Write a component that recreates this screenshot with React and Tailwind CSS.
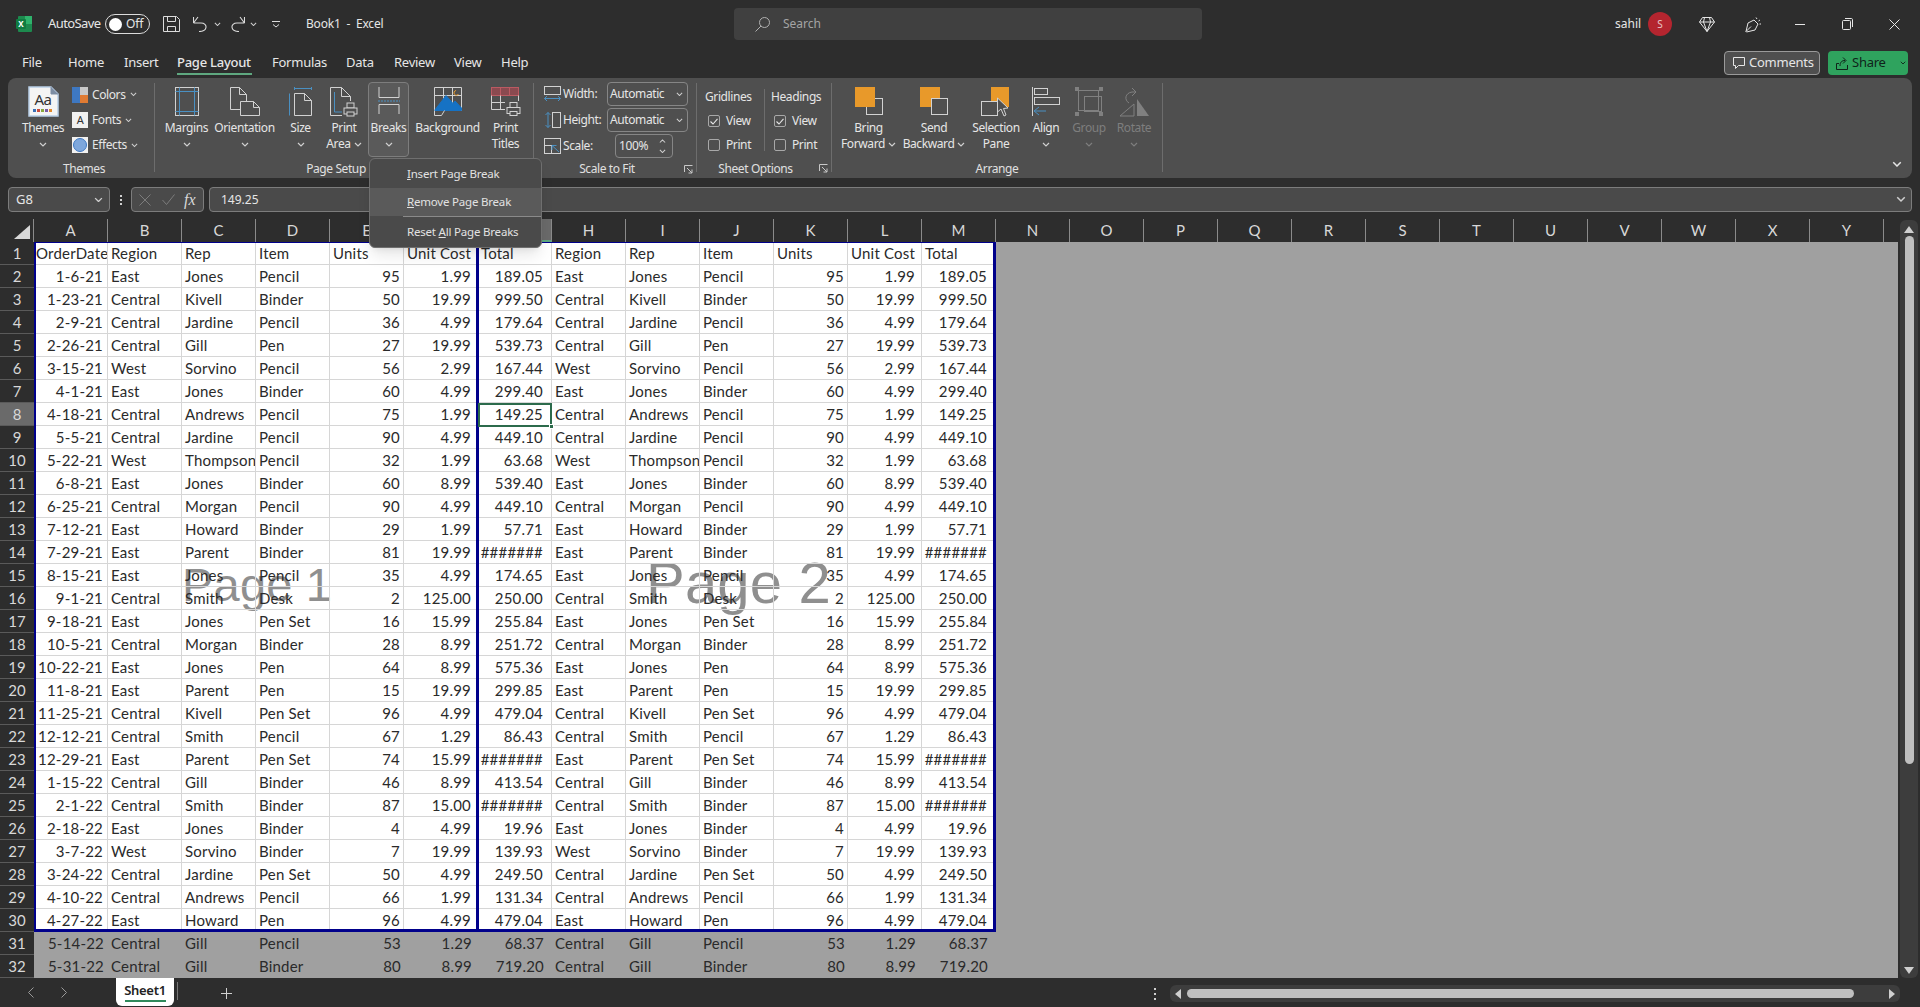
import React from "react";

const L = "#d2d2d2";
const B = "#4a90c2";
const O = "#e8992a";
const D = "#808080";

const rows = [
  ["1-6-21","East","Jones","Pencil","95","1.99","189.05"],
  ["1-23-21","Central","Kivell","Binder","50","19.99","999.50"],
  ["2-9-21","Central","Jardine","Pencil","36","4.99","179.64"],
  ["2-26-21","Central","Gill","Pen","27","19.99","539.73"],
  ["3-15-21","West","Sorvino","Pencil","56","2.99","167.44"],
  ["4-1-21","East","Jones","Binder","60","4.99","299.40"],
  ["4-18-21","Central","Andrews","Pencil","75","1.99","149.25"],
  ["5-5-21","Central","Jardine","Pencil","90","4.99","449.10"],
  ["5-22-21","West","Thompson","Pencil","32","1.99","63.68"],
  ["6-8-21","East","Jones","Binder","60","8.99","539.40"],
  ["6-25-21","Central","Morgan","Pencil","90","4.99","449.10"],
  ["7-12-21","East","Howard","Binder","29","1.99","57.71"],
  ["7-29-21","East","Parent","Binder","81","19.99","#######"],
  ["8-15-21","East","Jones","Pencil","35","4.99","174.65"],
  ["9-1-21","Central","Smith","Desk","2","125.00","250.00"],
  ["9-18-21","East","Jones","Pen Set","16","15.99","255.84"],
  ["10-5-21","Central","Morgan","Binder","28","8.99","251.72"],
  ["10-22-21","East","Jones","Pen","64","8.99","575.36"],
  ["11-8-21","East","Parent","Pen","15","19.99","299.85"],
  ["11-25-21","Central","Kivell","Pen Set","96","4.99","479.04"],
  ["12-12-21","Central","Smith","Pencil","67","1.29","86.43"],
  ["12-29-21","East","Parent","Pen Set","74","15.99","#######"],
  ["1-15-22","Central","Gill","Binder","46","8.99","413.54"],
  ["2-1-22","Central","Smith","Binder","87","15.00","#######"],
  ["2-18-22","East","Jones","Binder","4","4.99","19.96"],
  ["3-7-22","West","Sorvino","Binder","7","19.99","139.93"],
  ["3-24-22","Central","Jardine","Pen Set","50","4.99","249.50"],
  ["4-10-22","Central","Andrews","Pencil","66","1.99","131.34"],
  ["4-27-22","East","Howard","Pen","96","4.99","479.04"],
  ["5-14-22","Central","Gill","Pencil","53","1.29","68.37"],
  ["5-31-22","Central","Gill","Binder","80","8.99","719.20"],
];
const headers = ["OrderDate","Region","Rep","Item","Units","Unit Cost","Total"];
const cols = "ABCDEFGHIJKLMNOPQRSTUVWXY".split("");

function Chev({ size = 8, color = "#d0d0d0", up = false }) {
  return (
    <svg width={size} height={size * 0.625} viewBox="0 0 8 5" fill="none" stroke={color} strokeWidth="1.2" className="shrink-0">
      <path d={up ? "M1 4 L4 1 L7 4" : "M1 1 L4 4 L7 1"} />
    </svg>
  );
}

function Printer({ x, y, c = L }) {
  return (
    <g transform={`translate(${x} ${y})`} stroke={c} fill="#4f4f4f" strokeWidth="1">
      <rect x="3.5" y="0.5" width="7" height="5" />
      <rect x="0.5" y="5.5" width="13" height="6" />
      <rect x="3.5" y="9.5" width="7" height="4" />
    </g>
  );
}

function Ic({ w, h, children, cls = "" }) {
  return (
    <svg width={w} height={h} viewBox={`0 0 ${w} ${h}`} fill="none" className={`shrink-0 ${cls}`}>
      {children}
    </svg>
  );
}

const MarginsIcon = () => (
  <Ic w={24} h={29}>
    <rect x="0.5" y="0.5" width="23" height="28" stroke={L} />
    <path d="M4.5 0.5V28.5M19.5 0.5V28.5M0.5 4.5H23.5M0.5 24.5H23.5" stroke={B} />
  </Ic>
);
const OrientationIcon = () => (
  <Ic w={30} h={29}>
    <path d="M0.5 22.5V0.5H9.5L16.5 7.5V14.5M9.5 0.5V7.5H16.5M0.5 22.5H10.5" stroke={L} />
    <path d="M10.5 14.5H23.5L29.5 20.5V28.5H10.5ZM23.5 14.5V20.5H29.5" stroke={L} />
  </Ic>
);
const SizeIcon = () => (
  <Ic w={23} h={29}>
    <path d="M5.5 28.5V6.5H15.5L22.5 13.5V28.5ZM15.5 6.5V13.5H22.5" stroke={L} />
    <path d="M0.5 6.5V28.5M5.5 1.5H22.5M5.5 0V3M22.5 0V3" stroke={B} />
  </Ic>
);
const PrintAreaIcon = () => (
  <Ic w={28} h={30}>
    <path d="M0.5 28.5V0.5H11.5L20.5 9.5V14M11.5 0.5V9.5H20.5M0.5 28.5H12" stroke={L} />
    <path d="M4.5 5V25H12" stroke={B} />
    <Printer x={13.5} y={15.5} />
  </Ic>
);
const BreaksIcon = () => (
  <Ic w={22} h={27}>
    <path d="M1 0V10.5H21V0M1 27V17.5H21V27" stroke={L} />
    <path d="M0 14H22" stroke={B} strokeDasharray="2 1" />
  </Ic>
);
const BackgroundIcon = () => (
  <Ic w={28} h={29}>
    <path d="M0.5 0.5H27.5V23.5H0.5Z M9.5 0.5V23.5 M18.5 0.5V23.5 M0.5 8.5H27.5" stroke={L} />
    <path d="M0.5 23.5 L12 8.5 L19 16.5 L21 14 L27.5 21 V23.5 Z" fill="#1672c4" stroke="#1672c4" />
    <path d="M22 3.5a2.4 2.4 0 1 0 2.5 3.5" stroke={O} />
    <path d="M0.5 23.5V28.5H7.5L10.5 23.5" stroke={L} />
  </Ic>
);
const PrintTitlesIcon = () => (
  <Ic w={30} h={29}>
    <rect x="0.5" y="0.5" width="27" height="8" fill="#8a4a50" stroke="#bb5a62" />
    <path d="M9.5 0.5V8.5M18.5 0.5V8.5" stroke="#bb5a62" />
    <path d="M0.5 8.5V22.5H14M9.5 8.5V22.5M0.5 15.5H14M27.5 8.5V14" stroke={L} />
    <Printer x={15.5} y={15} />
  </Ic>
);
const BringIcon = () => (
  <Ic w={28} h={28}>
    <rect x="11.5" y="11.5" width="16" height="16" stroke={L} />
    <rect x="0" y="0" width="20" height="20" fill={O} />
  </Ic>
);
const SendIcon = () => (
  <Ic w={28} h={28}>
    <rect x="0" y="0" width="20" height="20" fill={O} />
    <rect x="11.5" y="11.5" width="16" height="16" stroke={L} fill="#4f4f4f" />
  </Ic>
);
const SelectionIcon = () => (
  <Ic w={30} h={30}>
    <rect x="10" y="0" width="18" height="20" fill={O} />
    <rect x="0.5" y="14.5" width="16" height="14" stroke={L} fill="#4f4f4f" />
    <path d="M16.5 11 L16.5 25 L20 22 L23 29 L25 28 L22.5 21.5 L27 21 Z" fill="#4f4f4f" stroke={L} />
  </Ic>
);
const AlignIcon = () => (
  <Ic w={29} h={29}>
    <path d="M0.5 0V29" stroke={L} />
    <rect x="2.5" y="1.5" width="13" height="6" stroke={L} />
    <rect x="2.5" y="10.5" width="25" height="7" stroke={L} />
    <path d="M2 24H14M2 24L7 20M2 24L7 28" stroke={B} />
  </Ic>
);
const GroupIcon = () => (
  <Ic w={28} h={29}>
    <rect x="3.5" y="3.5" width="20" height="20" stroke={D} />
    <rect x="9.5" y="9.5" width="17" height="15" stroke={D} />
    <path d="M0 0H4V4H0ZM24 0H28V4H24ZM0 25H4V29H0ZM24 25H28V29H24Z" fill={D} />
  </Ic>
);
const RotateIcon = () => (
  <Ic w={31} h={30}>
    <path d="M1 29 L15 17 V29 Z" stroke={D} />
    <path d="M18 12 L30 29 H18 Z" fill={D} />
    <path d="M13 1 L17 5 L13 9 M17 5 H13 C6 6 5 13 10 16" stroke={D} />
  </Ic>
);

const ThemesIcon = () => (
  <svg width="31" height="31" viewBox="0 0 31 31" fill="none" className="shrink-0">
    <path d="M1 1H23L30 8V30H1Z" fill="#f4f4f4" stroke="#b9cfe8" strokeWidth="1.5" />
    <path d="M23 1V8H30" fill="#7d8da3" stroke="#7d8da3" />
    <text x="15" y="19" textAnchor="middle" fontFamily="Noto Sans" fontSize="15" fill="#333">Aa</text>
    <rect x="5" y="23" width="3" height="3" fill="#3a6fb5" />
    <rect x="9" y="23" width="3" height="3" fill="#c8493a" />
    <rect x="13" y="23" width="3" height="3" fill="#8aa83d" />
    <rect x="17" y="23" width="3" height="3" fill="#7b5ba6" />
    <rect x="21" y="23" width="3" height="3" fill="#e08a2c" />
  </svg>
);
const ColorsIcon = () => (
  <Ic w={16} h={16}>
    <rect width="8" height="8" fill="#3e78c2" />
    <rect x="8" width="8" height="8" fill="#c9c9c9" />
    <rect y="8" width="8" height="8" fill="#3e78c2" />
    <rect x="8" y="8" width="8" height="8" fill="#e07b33" />
  </Ic>
);
const FontsIcon = () => (
  <div className="w-4 h-4 bg-[#f1f1f1] flex items-center justify-center text-[11px] leading-none text-[#333] shrink-0">A</div>
);
const EffectsIcon = () => (
  <Ic w={16} h={16}>
    <rect width="16" height="16" fill="#f1f1f1" />
    <circle cx="8" cy="8" r="6.5" fill="#7ea7dc" stroke="#3e78c2" />
  </Ic>
);
const WidthIcon = () => (
  <Ic w={17} h={16}>
    <rect x="0.5" y="0.5" width="16" height="8" stroke={L} />
    <path d="M0.5 12.5H16.5M0.5 12.5L3 10M0.5 12.5L3 15M16.5 12.5L14 10M16.5 12.5L14 15" stroke={B} />
  </Ic>
);
const HeightIcon = () => (
  <Ic w={17} h={16}>
    <rect x="8.5" y="0.5" width="8" height="15" stroke={L} />
    <path d="M4 0.5V15.5M4 0.5L1.5 3M4 0.5L6.5 3M4 15.5L1.5 13M4 15.5L6.5 13" stroke={B} />
  </Ic>
);
const ScaleIcon = () => (
  <Ic w={17} h={16}>
    <rect x="0.5" y="0.5" width="16" height="15" stroke={L} />
    <rect x="0.5" y="7.5" width="7" height="8" stroke={L} />
    <path d="M15 14L8 7.5M8 7.5V12M8 7.5H12.5" stroke={B} />
  </Ic>
);

function Launcher() {
  return (
    <svg width="9" height="9" viewBox="0 0 9 9" fill="none" stroke="#c8c8c8" className="absolute right-[3px] top-[5px]">
      <path d="M0.5 7V0.5H8.5M3 3L8 8M8 4.5V8H4.5" />
    </svg>
  );
}

function Big({ w, icon, lines, chev = "below", disabled = false, active = false }) {
  return (
    <div
      className={`flex flex-col items-center h-[75px] shrink-0 whitespace-nowrap text-xs leading-[16px] ${disabled ? "text-[#7e7e7e]" : "text-[#e6e6e6]"} ${
        active ? "bg-[#5a5a5a] border border-[#7d7d7d] rounded-[4px] mx-[2px]" : ""
      }`}
      style={{ width: w }}
    >
      <div className={`${active ? "h-[37px] pt-[4px]" : "h-[38px] pt-[5px]"} flex justify-center`}>{icon}</div>
      <div>{lines[0]}</div>
      {chev === "below" && (
        <div className="h-4 flex items-center">
          <Chev color={disabled ? "#7e7e7e" : "#d0d0d0"} />
        </div>
      )}
      {chev === "inline" && (
        <div className="flex items-center gap-[3px]">
          {lines[1]}
          <Chev />
        </div>
      )}
      {chev === "none" && <div>{lines[1]}</div>}
    </div>
  );
}

function GroupLabel({ children, cls = "", launcher = false }) {
  return (
    <div className={`relative h-[20px] flex items-center justify-center text-xs text-[#e0e0e0] whitespace-nowrap ${cls}`}>
      <span>{children}</span>
      {launcher && <Launcher />}
    </div>
  );
}

function Sep() {
  return <div className="w-px h-[89px] mt-[5px] bg-[#6d6d6d] shrink-0" />;
}

function Check({ on, label }) {
  return (
    <div className="h-6 flex items-center text-xs text-[#e6e6e6]">
      <div className="w-3 h-3 ml-[3px] mr-[6px] border border-[#a8a8a8] rounded-[2px] flex items-center justify-center shrink-0">
        {on && (
          <svg width="8" height="7" viewBox="0 0 8 7" fill="none" stroke="#e6e6e6" strokeWidth="1.1">
            <path d="M0.5 3.5L3 6L7.5 0.8" />
          </svg>
        )}
      </div>
      {label}
    </div>
  );
}

function ScaleRow({ icon, label, value, small }) {
  return (
    <div className="h-6 flex items-center text-xs text-[#e6e6e6]">
      <div className="w-[19px] shrink-0">{icon}</div>
      <div className="w-[44px] shrink-0">{label}</div>
      {small ? (
        <div className="ml-2 w-[58px] h-6 border border-[#868686] rounded-[4px] flex items-center justify-between pl-[3px] pr-[6px]">
          <span>{value}</span>
          <div className="flex flex-col gap-[5px]">
            <Chev size={7} up />
            <Chev size={7} />
          </div>
        </div>
      ) : (
        <div className="w-[81px] h-6 border border-[#868686] rounded-[4px] flex items-center justify-between pl-[2px] pr-[4px]">
          <span>{value}</span>
          <Chev size={7} />
        </div>
      )}
    </div>
  );
}

function TitleBar() {
  return (
    <div className="h-12 flex items-center text-[#e6e6e6] text-[13px] shrink-0">
      <svg width="16" height="16" viewBox="0 0 16 16" className="ml-4 shrink-0">
        <rect x="2" width="14" height="16" rx="1" fill="#1d8a4e" />
        <rect x="9" y="0" width="7" height="8" fill="#2fb36c" />
        <rect y="3" width="10" height="10" rx="1" fill="#107c41" />
        <text x="5" y="11" textAnchor="middle" fontSize="8" fontWeight="700" fontFamily="Noto Sans" fill="#fff">X</text>
      </svg>
      <span className="ml-4 w-[57px] tracking-[-0.6px]">AutoSave</span>
      <div className="w-[45px] h-[20px] border border-[#dcdcdc] rounded-full flex items-center pl-[3px] gap-[4px] text-xs">
        <div className="w-[13px] h-[13px] rounded-full bg-white" />
        Off
      </div>
      <svg width="17" height="16" viewBox="0 0 17 16" fill="none" stroke="#dcdcdc" className="ml-[13px]">
        <path d="M0.5 0.5H13.5L16.5 3.5V15.5H0.5ZM4.5 0.5V5.5H12.5V0.5M4.5 15.5V10.5H12.5V15.5" />
      </svg>
      <svg width="15" height="16" viewBox="0 0 15 16" fill="none" stroke="#dcdcdc" strokeWidth="1.1" className="ml-[13px]">
        <path d="M0.5 7H8C15 7 15 15.5 6 15.5M0.5 7L5 1M0.5 7V1" />
      </svg>
      <div className="ml-[6px]"><Chev size={7} /></div>
      <svg width="16" height="16" viewBox="0 0 16 16" fill="none" stroke="#dcdcdc" strokeWidth="1.1" className="ml-[8px]">
        <path d="M15.5 7H8C1 7 1 15.5 10 15.5M15.5 7L11 1M15.5 7V1" />
      </svg>
      <div className="ml-[5px]"><Chev size={7} /></div>
      <svg width="8" height="8" viewBox="0 0 8 8" fill="none" stroke="#dcdcdc" className="ml-[15px]">
        <path d="M0 1.5H8M1 4.5L4 7L7 4.5" />
      </svg>
      <span className="ml-[26px] text-xs w-[110px] tracking-[-0.2px]">Book1&nbsp; -&nbsp; Excel</span>
      <div className="ml-[318px] w-[468px] h-8 bg-[#404040] rounded-[4px] flex items-center pl-[21px] text-xs text-[#a4a4a4]">
        <svg width="15" height="15" viewBox="0 0 15 15" fill="none" stroke="#b0b0b0" className="shrink-0">
          <circle cx="9.5" cy="5.5" r="5" />
          <path d="M6 9L0.5 14.5" />
        </svg>
        <span className="ml-[13px]">Search</span>
      </div>
      <span className="ml-[413px] text-xs w-[33px]">sahil</span>
      <div className="w-6 h-6 rounded-full bg-[#b4252f] flex items-center justify-center text-[10px] text-[#e8c8c8]">S</div>
      <svg width="16" height="15" viewBox="0 0 16 15" fill="none" stroke="#e6e6e6" className="ml-[27px]">
        <path d="M3.5 0.5H12.5L15.5 5L8 14.5L0.5 5ZM0.5 5H15.5M5.5 0.5L4.5 5L8 14.5L11.5 5L10.5 0.5" />
      </svg>
      <svg width="17" height="17" viewBox="0 0 17 17" fill="none" stroke="#e6e6e6" className="ml-[30px]">
        <path d="M1 15.5L3 7L9 4L13 8L10 14L1.5 16ZM1 15.5L6 10.5M11 1.5L12 3M15 4L13.5 5M16 8H14.5" />
      </svg>
      <div className="ml-[33px] w-[10px] h-px bg-[#e6e6e6]" />
      <svg width="11" height="12" viewBox="0 0 11 12" fill="none" stroke="#e6e6e6" className="ml-[37px]">
        <rect x="0.5" y="2.5" width="8" height="9" rx="1" />
        <path d="M3 0.5H9.5C10 0.5 10.5 1 10.5 1.5V9" />
      </svg>
      <svg width="11" height="11" viewBox="0 0 11 11" fill="none" stroke="#e6e6e6" className="ml-[36px]">
        <path d="M0.5 0.5L10.5 10.5M10.5 0.5L0.5 10.5" />
      </svg>
    </div>
  );
}

const tabWidths = [24, 36, 38, 75, 56, 28, 44, 30, 26];

function TabsBar() {
  const tabs = [
    ["File", 22, 0], ["Home", 68, 0], ["Insert", 124, 0], ["Page Layout", 177, 1],
    ["Formulas", 272, 0], ["Data", 346, 0], ["Review", 394, 0], ["View", 454, 0], ["Help", 501, 0],
  ];
  return (
    <div className="h-[30px] flex shrink-0 text-[#e6e6e6] text-[13px] tracking-[-0.25px]">
      <div className="flex">
        {tabs.map(([t, x, a], i) => (
          <div
            key={t}
            className={`h-[27px] pt-[5px] flex items-center whitespace-nowrap border-b-2 ${a ? "border-[#5fa880] font-medium" : "border-transparent"}`}
            style={{ marginLeft: i === 0 ? x : x - tabs[i - 1][1] - tabWidths[i - 1] }}
          >
            <span style={{ width: tabWidths[i] }} className="block">{t}</span>
          </div>
        ))}
      </div>
      <div className="ml-auto flex items-center gap-[8px] pr-[12px] h-[24px] mt-[3px]">
        <div className="w-[96px] h-6 border border-[#9a9a9a] bg-[#4f4f4f] rounded-[4px] flex items-center pl-[8px] gap-[4px]">
          <svg width="12" height="12" viewBox="0 0 12 12" fill="none" stroke="#e6e6e6" className="shrink-0">
            <path d="M0.5 0.5H11.5V8.5H5.5L2.5 11.5V8.5H0.5Z" />
          </svg>
          Comments
        </div>
        <div className="w-[80px] h-6 bg-[#2fa35e] rounded-[4px] flex items-center pl-[8px] gap-[4px] text-[#10231a]">
          <svg width="12" height="13" viewBox="0 0 12 13" fill="none" stroke="#10231a" className="shrink-0">
            <path d="M3 6.5H0.5V12.5H11.5V8M4 9C4 5 6 3.5 9 3.5M7 0.5L10 3.5L7 6.5" />
          </svg>
          Share
          <div className="ml-[10px]"><Chev size={6} color="#10231a" /></div>
        </div>
      </div>
    </div>
  );
}

function Ribbon() {
  return (
    <div className="relative mx-2 h-[100px] rounded-lg bg-[#4f4f4f] flex shrink-0 tracking-[-0.4px]">
      {/* Themes */}
      <div className="w-[146px] shrink-0 pt-1 flex flex-col">
        <div className="flex h-[76px]">
          <div className="ml-[14px] w-[42px] flex flex-col items-center text-xs text-[#e6e6e6] leading-[16px]">
            <div className="h-[38px] pt-[4px]"><ThemesIcon /></div>
            Themes
            <div className="h-4 flex items-center"><Chev /></div>
          </div>
          <div className="ml-2 flex flex-col text-xs text-[#e6e6e6]">
            {[[<ColorsIcon key="a" />, "Colors"], [<FontsIcon key="b" />, "Fonts"], [<EffectsIcon key="c" />, "Effects"]].map(([ic, t]) => (
              <div key={t} className="h-[26px] flex items-center gap-1">
                {ic}
                {t}
                <Chev size={7} />
              </div>
            ))}
          </div>
        </div>
        <GroupLabel cls="pl-[6px] mt-[2px]">Themes</GroupLabel>
      </div>
      <Sep />
      {/* Page setup */}
      <div className="w-[378px] shrink-0 pt-1 flex flex-col">
        <div className="flex h-[76px] pl-2">
          <Big w={47} icon={<MarginsIcon />} lines={["Margins"]} />
          <Big w={69} icon={<OrientationIcon />} lines={["Orientation"]} />
          <Big w={43} icon={<SizeIcon />} lines={["Size"]} />
          <Big w={44} icon={<PrintAreaIcon />} lines={["Print", "Area"]} chev="inline" />
          <Big w={41} active icon={<BreaksIcon />} lines={["Breaks"]} />
          <Big w={73} icon={<BackgroundIcon />} lines={["Background"]} chev="none" />
          <Big w={43} icon={<PrintTitlesIcon />} lines={["Print", "Titles"]} chev="none" />
        </div>
        <GroupLabel cls="pr-[16px] mt-[2px]">Page Setup</GroupLabel>
      </div>
      <Sep />
      {/* Scale */}
      <div className="w-[162px] shrink-0 pt-1 flex flex-col">
        <div className="flex flex-col gap-[2px] h-[76px] pl-[10px]">
          <ScaleRow icon={<WidthIcon />} label="Width:" value="Automatic" />
          <ScaleRow icon={<HeightIcon />} label="Height:" value="Automatic" />
          <ScaleRow icon={<ScaleIcon />} label="Scale:" value="100%" small />
        </div>
        <GroupLabel cls="pr-[16px] mt-[2px]" launcher>Scale to Fit</GroupLabel>
      </div>
      <Sep />
      {/* Sheet options */}
      <div className="w-[134px] shrink-0 pt-[7px] flex flex-col">
        <div className="flex h-[73px] pl-2">
          <div className="w-[59px] text-xs text-[#e6e6e6]">
            <div className="h-6 flex items-center">Gridlines</div>
            <Check on label="View" />
            <Check label="Print" />
          </div>
          <div className="w-px h-[62px] mt-[4px] bg-[#6d6d6d]" />
          <div className="ml-[6px] text-xs text-[#e6e6e6]">
            <div className="h-6 flex items-center">Headings</div>
            <Check on label="View" />
            <Check label="Print" />
          </div>
        </div>
        <GroupLabel cls="pr-[17px] mt-[2px]" launcher>Sheet Options</GroupLabel>
      </div>
      <Sep />
      {/* Arrange */}
      <div className="w-[330px] shrink-0 pt-1 flex flex-col">
        <div className="flex h-[76px] pl-px">
          <Big w={71} icon={<BringIcon />} lines={["Bring", "Forward"]} chev="inline" />
          <Big w={60} icon={<SendIcon />} lines={["Send", "Backward"]} chev="inline" />
          <Big w={64} icon={<SelectionIcon />} lines={["Selection", "Pane"]} chev="none" />
          <Big w={36} icon={<AlignIcon />} lines={["Align"]} />
          <Big w={50} disabled icon={<GroupIcon />} lines={["Group"]} />
          <Big w={40} disabled icon={<RotateIcon />} lines={["Rotate"]} />
        </div>
        <GroupLabel cls="mt-[2px]">Arrange</GroupLabel>
      </div>
      <Sep />
      <div className="flex-1 flex justify-end items-end pr-[10px] pb-[11px]">
        <Chev size={10} color="#e6e6e6" />
      </div>
      {/* Breaks dropdown */}
      <div className="absolute left-[361px] top-[80px] w-[173px] h-[90px] z-30 bg-[#4a4a4a] border border-[#6f6f6f] rounded-md shadow-lg text-[11.5px] tracking-[-0.2px] text-[#e2e2e2] flex flex-col">
        <div className="h-[29px] flex items-center pl-[37px]"><span><u>I</u>nsert Page Break</span></div>
        <div className="h-[28px] flex items-center pl-[37px] bg-[#5a5a5a]"><span><u>R</u>emove Page Break</span></div>
        <div className="ml-[33px] h-px bg-[#8a8a8a]" />
        <div className="flex-1 flex items-center pl-[37px]"><span>Reset <u>A</u>ll Page Breaks</span></div>
      </div>
    </div>
  );
}

function FormulaBar() {
  return (
    <div className="mt-[9px] h-[25px] mx-2 flex items-stretch shrink-0 text-[13px] text-[#e6e6e6]">
      <div className="w-[102px] border border-[#7c7c7c] bg-[#4a4a4a] rounded-[4px] flex items-center justify-between pl-[7px] pr-[6px]">
        G8
        <Chev size={9} />
      </div>
      <div className="w-[21px] flex flex-col items-center justify-center gap-[2px]">
        <div className="w-[2px] h-[2px] bg-[#d0d0d0]" />
        <div className="w-[2px] h-[2px] bg-[#d0d0d0]" />
        <div className="w-[2px] h-[2px] bg-[#d0d0d0]" />
      </div>
      <div className="w-[73px] border border-[#7c7c7c] bg-[#4a4a4a] rounded-[4px] flex items-center pl-[7px]">
        <svg width="12" height="12" viewBox="0 0 12 12" fill="none" stroke="#7c7c7c"><path d="M0.5 0.5L11.5 11.5M11.5 0.5L0.5 11.5" /></svg>
        <svg width="13" height="11" viewBox="0 0 13 11" fill="none" stroke="#7c7c7c" className="ml-[11px]"><path d="M0.5 6L4.5 10.5L12.5 0.5" /></svg>
        <span className="ml-[9px] font-['Liberation_Serif',serif] italic text-[16px] text-[#d8d8d8]">fx</span>
      </div>
      <div className="ml-[5px] flex-1 border border-[#7c7c7c] bg-[#4a4a4a] rounded-[4px] flex items-center justify-between pl-[11px] pr-[5px] text-xs">
        149.25
        <Chev size={10} />
      </div>
    </div>
  );
}

const cellAlign = ["pl-[2px] pr-[4px] text-right", "pl-[3px]", "pl-[3px]", "pl-[3px]", "pr-[3px] text-right", "pr-[6px] text-right", "pr-[8px] text-right"];

function Cell({ text, col, plain, header }) {
  return (
    <div
      className={`h-[23px] overflow-hidden whitespace-nowrap leading-[22px] ${header ? (col === 0 ? "pl-[2px] text-left" : "pl-[3px] text-left") : cellAlign[col]} ${
        plain ? "" : "border-r border-b border-[#d6d6d6]"
      }`}
    >
      {text}
    </div>
  );
}

function DataRow({ vals, plain, header }) {
  const all = [...vals, ...vals.slice(1)];
  return (
    <div className="grid grid-cols-[repeat(13,74px)]">
      {all.map((v, i) => (
        <Cell key={i} text={v} col={i === 0 ? 0 : ((i - 1) % 6) + 1} plain={plain} header={header} />
      ))}
    </div>
  );
}

function Sheet() {
  return (
    <div className="mt-[7px] flex-1 flex min-h-0 overflow-hidden">
      <div className="flex-1 flex flex-col min-w-0">
        <div className="h-[23px] flex shrink-0 font-['Lato',sans-serif] text-[15px] text-[#d8d8d8]">
          <div className="w-[34px] flex items-end justify-end pr-[3px] pb-[3px] border-r border-[#8a8a8a]">
            <svg width="16" height="14" viewBox="0 0 16 14" fill="#d8d8d8"><path d="M16 0V14H0Z" /></svg>
          </div>
          {cols.map((c, i) => (
            <div
              key={c}
              className={`w-[74px] shrink-0 flex items-center justify-center border-r border-[#8a8a8a] ${
                i === 6 ? "bg-[#6a6a6a] border-b-2 border-b-[#5fa880]" : ""
              }`}
            >
              {c}
            </div>
          ))}
        </div>
        <div className="flex-1 flex min-h-0 bg-[#a0a0a0]">
          <div className="w-[34px] shrink-0 bg-[#2d2d2d] font-['Lato',sans-serif] text-[15px] text-[#d8d8d8]">
            {Array.from({ length: 32 }, (_, i) => (
              <div
                key={i}
                className={`h-[23px] flex items-center justify-center border-b border-[#5a5a5a] ${i === 7 ? "bg-[#6a6a6a]" : ""}`}
              >
                {i + 1}
              </div>
            ))}
          </div>
          <div className="relative w-[962px] shrink-0 font-['Lato',sans-serif] text-[15px] tracking-[0.2px] text-[#2a2a2a]">
            <div className="relative bg-white h-[690px]">
              <div className="absolute left-[148px] top-[319px] font-['Liberation_Sans',sans-serif] text-[47px] leading-none text-[#8f8f8f] whitespace-nowrap">Page 1</div>
              <div className="absolute left-[612px] top-[312px] font-['Liberation_Sans',sans-serif] text-[58px] leading-none text-[#8f8f8f] whitespace-nowrap">Page 2</div>
              <div className="relative">
                <DataRow vals={headers} header />
                {rows.slice(0, 29).map((r, i) => (
                  <DataRow key={i} vals={r} />
                ))}
              </div>
              <div className="absolute inset-0 border-t border-l-2 border-r-[3px] border-b-[3px] border-[#00008b] pointer-events-none" />
              <div className="absolute left-[442px] top-0 bottom-0 w-[3px] bg-[#00008b] pointer-events-none" />
              <div className="absolute left-[444px] top-[161px] w-[74px] h-[24px] border-2 border-[#2c6b4c] pointer-events-none" />
              <div className="absolute left-[515px] top-[182px] w-[5px] h-[5px] bg-[#2c6b4c] border border-white pointer-events-none" />
            </div>
            {rows.slice(29).map((r, i) => (
              <DataRow key={i} vals={r} plain />
            ))}
          </div>
          <div className="flex-1" />
        </div>
      </div>
      <div className="w-[22px] shrink-0 pl-[2px] pr-[2px] pt-[1px] flex flex-col">
        <div className="flex-1 bg-[#3d3d3d] rounded-[6px] flex flex-col items-center pt-[6px] pb-[4px]">
          <svg width="10" height="7" viewBox="0 0 10 7" fill="#cfcfcf"><path d="M5 0L10 7H0Z" /></svg>
          <div className="mt-[3px] w-[9px] h-[528px] rounded-full bg-[#c0c0c0]" />
          <div className="flex-1" />
          <svg width="10" height="7" viewBox="0 0 10 7" fill="#cfcfcf"><path d="M5 7L0 0H10Z" /></svg>
        </div>
      </div>
    </div>
  );
}

function SheetTabs() {
  return (
    <div className="h-[29px] flex shrink-0 text-[#bdbdbd]">
      <div className="ml-[28px] pt-[9px]">
        <svg width="6" height="11" viewBox="0 0 6 11" fill="none" stroke="#9a9a9a"><path d="M5.5 0.5L0.5 5.5L5.5 10.5" /></svg>
      </div>
      <div className="ml-[27px] pt-[9px]">
        <svg width="6" height="11" viewBox="0 0 6 11" fill="none" stroke="#9a9a9a"><path d="M0.5 0.5L5.5 5.5L0.5 10.5" /></svg>
      </div>
      <div className="ml-[49px] w-[58px] h-[28px] bg-white rounded-b-[6px] flex flex-col items-center text-[13px] font-semibold tracking-[-0.3px] text-[#222] pt-[3px] leading-[18px]">
        Sheet1
        <div className="w-[41px] h-[2px] bg-[#2f8a5c] mt-[1px]" />
      </div>
      <div className="ml-[3px] w-px h-[18px] mt-[4px] bg-[#777]" />
      <svg width="11" height="11" viewBox="0 0 11 11" fill="none" stroke="#d0d0d0" className="ml-[43px] mt-[10px]"><path d="M5.5 0V11M0 5.5H11" /></svg>
      <div className="ml-[922px] w-[2px] mt-[10px] flex flex-col gap-[3px]">
        <div className="h-[2px] bg-[#d0d0d0]" />
        <div className="h-[2px] bg-[#d0d0d0]" />
        <div className="h-[2px] bg-[#d0d0d0]" />
      </div>
      <div className="ml-[14px] mt-[7px] w-[730px] h-[17px] rounded-[6px] bg-[#3d3d3d] flex items-center pl-[5px] pr-[5px]">
        <svg width="6" height="10" viewBox="0 0 6 10" fill="#cfcfcf"><path d="M0 5L6 0V10Z" /></svg>
        <div className="ml-[6px] w-[667px] h-[9px] rounded-full bg-[#c0c0c0]" />
        <div className="flex-1" />
        <svg width="6" height="10" viewBox="0 0 6 10" fill="#cfcfcf"><path d="M6 5L0 0V10Z" /></svg>
      </div>
    </div>
  );
}

export default function App() {
  return (
    <div className="w-full h-screen overflow-hidden bg-[#2d2d2d] flex flex-col font-['Noto_Sans',sans-serif]">
      <TitleBar />
      <TabsBar />
      <Ribbon />
      <FormulaBar />
      <Sheet />
      <SheetTabs />
    </div>
  );
}
